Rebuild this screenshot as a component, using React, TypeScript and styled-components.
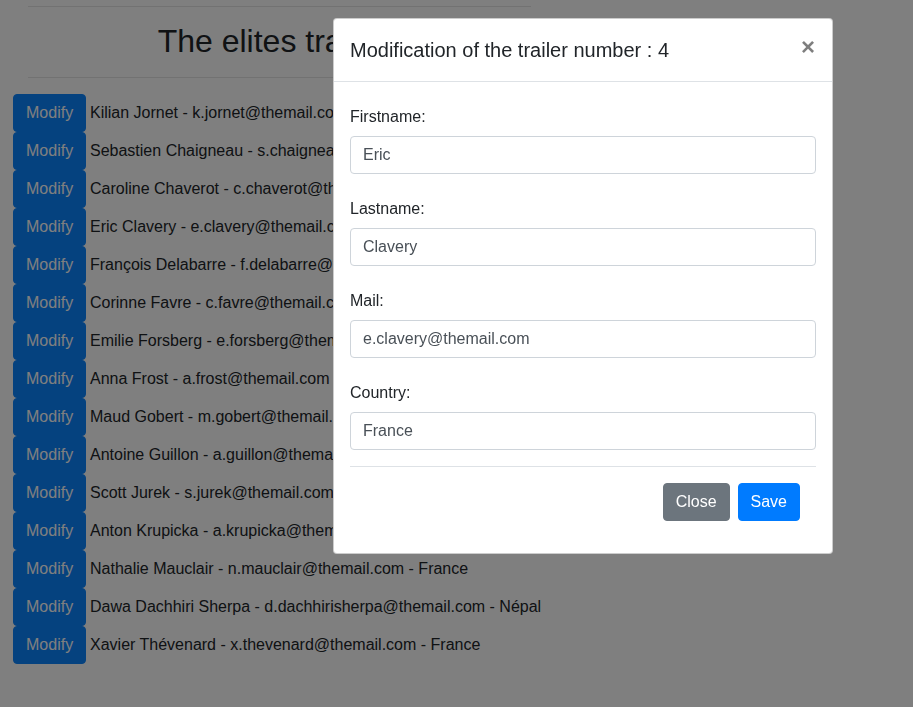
import React from "react";
import styled, { createGlobalStyle } from "styled-components";

const GlobalStyle = createGlobalStyle`
  html, body {
    margin: 0;
    padding: 0;
    background: #fff;
    font-family: "Liberation Sans", Arial, sans-serif;
    font-size: 16px;
    color: #212529;
  }
`;

interface Trailer {
  id: number;
  firstname: string;
  lastname: string;
  mail: string;
  country: string;
}

const trailers: Trailer[] = [
  { id: 1, firstname: "Kilian", lastname: "Jornet", mail: "k.jornet@themail.com", country: "Espagne" },
  { id: 2, firstname: "Sebastien", lastname: "Chaigneau", mail: "s.chaigneau@themail.com", country: "France" },
  { id: 3, firstname: "Caroline", lastname: "Chaverot", mail: "c.chaverot@themail.com", country: "France" },
  { id: 4, firstname: "Eric", lastname: "Clavery", mail: "e.clavery@themail.com", country: "France" },
  { id: 5, firstname: "François", lastname: "Delabarre", mail: "f.delabarre@themail.com", country: "France" },
  { id: 6, firstname: "Corinne", lastname: "Favre", mail: "c.favre@themail.com", country: "France" },
  { id: 7, firstname: "Emilie", lastname: "Forsberg", mail: "e.forsberg@themail.com", country: "Suède" },
  { id: 8, firstname: "Anna", lastname: "Frost", mail: "a.frost@themail.com", country: "Nouvelle-Zélande" },
  { id: 9, firstname: "Maud", lastname: "Gobert", mail: "m.gobert@themail.com", country: "France" },
  { id: 10, firstname: "Antoine", lastname: "Guillon", mail: "a.guillon@themail.com", country: "France" },
  { id: 11, firstname: "Scott", lastname: "Jurek", mail: "s.jurek@themail.com", country: "USA" },
  { id: 12, firstname: "Anton", lastname: "Krupicka", mail: "a.krupicka@themail.com", country: "USA" },
  { id: 13, firstname: "Nathalie", lastname: "Mauclair", mail: "n.mauclair@themail.com", country: "France" },
  { id: 14, firstname: "Dawa Dachhiri", lastname: "Sherpa", mail: "d.dachhirisherpa@themail.com", country: "Népal" },
  { id: 15, firstname: "Xavier", lastname: "Thévenard", mail: "x.thevenard@themail.com", country: "France" },
];

const Page = styled.div`
  padding: 6px 0 40px 13px;
`;

const Header = styled.header`
  width: 503px;
  margin-left: 15px;
`;

const Rule = styled.hr`
  margin: 0;
  border: 0;
  border-top: 1px solid rgba(0, 0, 0, 0.1);
`;

const Title = styled.h2`
  margin: 0;
  padding: 15px 0 16px;
  font-size: 32px;
  font-weight: 500;
  line-height: 39px;
  text-align: center;
`;

const List = styled.ul`
  list-style: none;
  margin: 16px 0 0;
  padding: 0;
`;

const Row = styled.li`
  display: flex;
  align-items: center;
  gap: 4px;
  height: 38px;
`;

const ModifyButton = styled.button`
  width: 73px;
  height: 38px;
  padding: 6px 12px;
  border: 1px solid #0a84ff;
  border-radius: 4px;
  background: #0a84ff;
  color: #fff;
  font-family: inherit;
  font-size: 16px;
  line-height: 24px;
  cursor: pointer;
`;

const Backdrop = styled.div`
  position: fixed;
  inset: 0;
  background: rgba(0, 0, 0, 0.5);
`;

const Modal = styled.div`
  position: fixed;
  top: 18px;
  left: 333px;
  width: 498px;
  background: #fff;
  border: 1px solid rgba(0, 0, 0, 0.2);
  border-radius: 4px;
`;

const ModalHeader = styled.div`
  display: flex;
  align-items: flex-start;
  justify-content: space-between;
  padding: 16px;
  border-bottom: 1px solid #dee2e6;
`;

const ModalTitle = styled.h5`
  margin: 0;
  font-size: 20px;
  font-weight: 500;
  line-height: 30px;
`;

const CloseX = styled.button`
  margin: -3px 1px 0 0;
  padding: 0;
  border: 0;
  background: transparent;
  color: #000;
  opacity: 0.5;
  font-family: inherit;
  font-size: 24px;
  font-weight: 700;
  line-height: 30px;
  text-shadow: 0 1px 0 #fff;
  cursor: pointer;
`;

const ModalBody = styled.form`
  padding: 23px 16px 32px;
`;

const Group = styled.div`
  margin-bottom: 23px;
`;

const Label = styled.label`
  display: block;
  margin-bottom: 7px;
  line-height: 24px;
`;

const Input = styled.input`
  display: block;
  box-sizing: border-box;
  width: 100%;
  height: 38px;
  padding: 6px 12px;
  border: 1px solid #ced4da;
  border-radius: 4px;
  color: #495057;
  font-family: inherit;
  font-size: 16px;
  line-height: 24px;
`;

const FooterRule = styled.hr`
  margin: -7px 0 16px;
  border: 0;
  border-top: 1px solid #dee2e6;
`;

const Actions = styled.div`
  display: flex;
  justify-content: flex-end;
  gap: 8px;
  padding-right: 16px;
`;

const ActionButton = styled.button<{ $variant: "secondary" | "primary" }>`
  height: 38px;
  padding: 6px 12px;
  border: 1px solid ${(p) => (p.$variant === "primary" ? "#007bff" : "#6c757d")};
  border-radius: 4px;
  background: ${(p) => (p.$variant === "primary" ? "#007bff" : "#6c757d")};
  color: #fff;
  font-family: inherit;
  font-size: 16px;
  line-height: 24px;
  cursor: pointer;
`;

export default function App() {
  const current = trailers[3];
  const fields: [string, string][] = [
    ["Firstname:", current.firstname],
    ["Lastname:", current.lastname],
    ["Mail:", current.mail],
    ["Country:", current.country],
  ];

  return (
    <>
      <GlobalStyle />
      <Page>
        <Header>
          <Rule />
          <Title>The elites trailers</Title>
          <Rule />
        </Header>
        <List>
          {trailers.map((t) => (
            <Row key={t.id}>
              <ModifyButton type="button">Modify</ModifyButton>
              <span>
                {t.firstname} {t.lastname} - {t.mail} - {t.country}
              </span>
            </Row>
          ))}
        </List>
      </Page>
      <Backdrop />
      <Modal role="dialog">
        <ModalHeader>
          <ModalTitle>Modification of the trailer number : {current.id}</ModalTitle>
          <CloseX type="button" aria-label="Close">
            ×
          </CloseX>
        </ModalHeader>
        <ModalBody onSubmit={(e) => e.preventDefault()}>
          {fields.map(([label, value]) => (
            <Group key={label}>
              <Label>{label}</Label>
              <Input type="text" defaultValue={value} />
            </Group>
          ))}
          <FooterRule />
          <Actions>
            <ActionButton type="button" $variant="secondary">
              Close
            </ActionButton>
            <ActionButton type="submit" $variant="primary">
              Save
            </ActionButton>
          </Actions>
        </ModalBody>
      </Modal>
    </>
  );
}
